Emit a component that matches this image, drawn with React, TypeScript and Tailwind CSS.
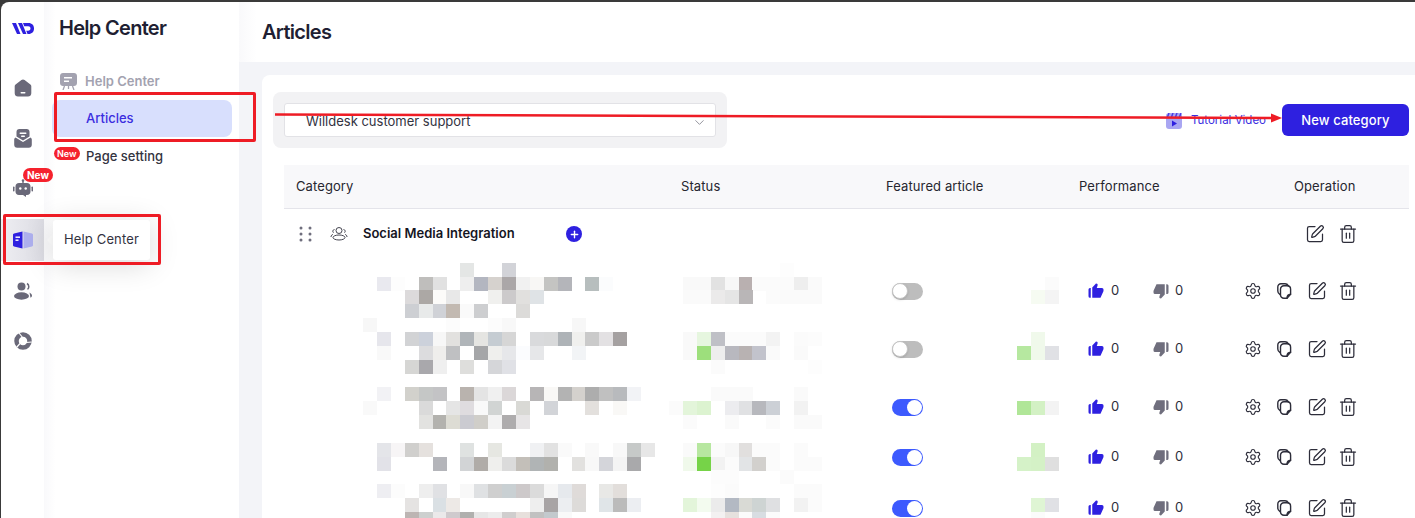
import React from 'react';
import { ChevronDown, Settings, SquarePen, Trash2, Plus } from 'lucide-react';
import { BiSolidLike, BiSolidDislike } from 'react-icons/bi';

// pixelated (redacted) parts of the table: row -> "column:colour" cells
type Cells = Record<number, string>;

const CELL_W = 13.9;
const CELL_H = 13.85;

const rows: { top: number; height: string; h: number; on: boolean; title: Cells; status: Cells; perf: Cells }[] = [
  {
    top: 262,
    height: 'h-[58px]',
    h: 58,
    on: false,
    title: {
      0: '7:e4e6e5 10:d2d3d8',
      1: '1:e9e9ef 2:fdfdfd 4:bfbebc 5:e1e1e1 7:eeeeee 8:b3b6c0 9:d6d2ce 10:aba7a8 11:f1f1f1 12:f8f7f5 13:c4c4c2 14:b4b5ba 16:b7bebe 17:fbfcfd',
      2: '3:dcdadb 4:aca8a5 5:fcfbf9 6:e8e8e8 9:f0f0ee 10:cccacb 11:e1e0de 12:dfe3e6',
      3: '3:cdcfd3 4:e8eaea 5:d0d2d7 6:c2b9b1 7:fafafa 8:cdced0 11:dcdbd9',
    },
    status: {
      0: '30:fdfdfd',
      1: '23:f9f9f9 24:f9f9f9 25:e2e2e2 26:f7f7f7 27:b9b0b0 28:fbfbfb 29:fbfbfb 30:fbfbfb 31:eeeeee 32:fafafa',
      2: '23:fafafa 24:fafafa 25:ebeaea 26:e5e5e5 27:b9b6b7 29:fbfbfb 30:fafafa 31:fafafa 32:fafafa',
    },
    perf: { 1: '49:fbfbfb', 2: '48:f6fbf2 49:f4f4f4' },
  },
  {
    top: 320,
    height: 'h-[58px]',
    h: 58,
    on: false,
    title: {
      4: '0:f7f7f7 6:fcfcfc 9:fcfcfc 10:f8f8f8 15:f7f7f7',
      5: '1:e6e6ec 3:d2d3d5 4:ccd1db 5:f7f7f7 6:e2e1df 7:b0b5b9 8:e5e5e2 9:c5ccd2 10:d6d6d6 12:d9dadc 13:d8d9da 14:aeb3b7 15:f0f0ee 16:cacaca 17:e3e1e3 18:a5a1a1',
      6: '1:f9f9f9 4:dcdcde 5:efeeec 6:bfc0c2 8:a5a6a8 9:efefed 10:e6e7ea 11:fbfcfe 12:e6e7e9 15:f2f4f6',
      7: '3:d6d6d4 4:a9a8ac 5:efefef 7:dededc 9:d5d6d9 10:e0e1e6',
    },
    status: {
      5: '23:f9f9f9 24:e6f6df 25:bfc0c6 26:fbfbfb 27:fbfbfb 28:fbfbfb 29:f3f3f3 31:fbfbfb 32:fcfcfc',
      6: '23:f9f9f9 24:9ddf7c 25:eeeeee 26:b8b8bf 27:b8b2b2 28:c2c3cc 29:fafafa 31:fafafa',
      7: '25:fbfbfb 32:fdfdfd',
    },
    perf: { 5: '48:f0f9eb', 6: '47:b6e8a0 48:f0f9eb 49:e0e1e5' },
  },
  {
    top: 378,
    height: 'h-[58px]',
    h: 58,
    on: true,
    title: {
      9: '1:f2f2f5 3:d2d1cc 4:c5c7c6 5:c3c3c5 7:b9b3ae 8:e4e4e4 9:f0f0f0 10:dbd7d8 12:b7b5b6 13:f9f8f6 14:b3b3b3 15:d4d1cd 16:adadad 17:c0c0c0 18:b8babd 19:f2f3f6',
      10: '0:f9f9f9 4:dadada 6:e5e5e5 7:dfdcdf 8:f9f9f9 9:d1d4d3 11:d9d9d5 13:d2d4d8 16:e3e0dd 18:f9f8f6 22:fafafa',
      11: '4:e2e2e0 5:b3b2ae 6:dddcd4 7:cbcbd1 8:d0cec9 9:f3f3f3 10:aeacad 11:e7e5e6',
    },
    status: {
      9: '25:fafafa 26:fafafa 27:fafafa 31:fafafa',
      10: '22:fbfbfb 23:e3f5da 24:dcf3d0 26:ececef 27:e0e1e3 28:b7b8bd 29:ccd0d6 31:f2f2f2',
      11: '23:fbfbfb 26:fafafa 29:fbfbfb 31:fafafa 32:fafafa',
    },
    perf: { 10: '47:b0e698 48:d3f1c4 49:f3f3f3' },
  },
  {
    top: 436,
    height: 'h-[42px]',
    h: 42,
    on: true,
    title: {
      13: '1:e4e5e9 2:f7f5f6 3:d0cfcd 4:e5e1de 7:dfe2e1 9:e6e7e2 12:f0f1f3 13:e2e2e2 14:fafafa 16:f9f9f9 18:f8f8f8 19:c6c9c8 20:e7e7e7',
      14: '1:e2e2e8 5:b4b5ba 7:d2d4d6 8:b0aca8 9:efefed 10:dbdbdb 11:c3bfb9 12:b0b4b5 13:b1b1ad 15:e2e1df 16:f8f8f8 17:d4d5da 18:f4f4f4 19:a9a9ab',
    },
    status: {
      13: '23:fafafa 24:b7e7a0 25:fbfbfb 26:f7f7f7 27:e1dfde 28:fbfbfb 29:fbfbfb 31:fbfbfb',
      14: '23:f0f9eb 24:76d348 25:f2f2f2 26:fbfbfb 27:e2e4e6 28:d2d0cd 29:fbfbfb 31:fbfbfb 32:fbfbfb',
      15: '25:fcfcfc 26:fcfcfc 30:fbfbfb',
    },
    perf: { 13: '48:d3f1c4', 14: '47:d5f2c8 48:d4f1c6 49:dfdfdf' },
  },
  {
    top: 478,
    height: 'h-[60px]',
    h: 60,
    on: true,
    title: {
      16: '1:eeeef2 2:fcfcfc 4:eeeeee 5:e0e1e4 7:f8f8f8 8:dfe1e3 9:cfcfcf 10:c9d0d3 11:cdc9ca 12:dbdbdb 13:f6f6f6 14:e6e9ed 15:dfdbd9 17:e8e8e6 18:e2dedb',
      17: '3:e5e3e2 5:dae0e4 6:ede9e6 12:eeeeee 13:a8a4a5 14:eceef1 15:dddbd9 17:e0e5e8 18:bbbbbb 19:eceef2',
      18: '3:bdb5b3 4:cdd0cf 5:ebe9ea 6:cfcacd 7:b0b0ae 8:e6e6e6 9:ececec 10:d0cece 11:e7e0dc 12:c1c1c1 13:c3c9cd 14:f9f9f9',
    },
    status: {
      16: '25:fdfdfd 26:fbfbfb 31:fbfbfb 32:fbfbfb',
      17: '23:e3f5da 24:f3fbef 25:ebebeb 26:b3b9c3 27:d9dad5 28:ced4d3 29:dfe0e2 31:f2f2f2 32:fbfbfb',
      18: '25:f3f1f1 26:e6e1de 27:fbfbfb 28:d8dde2 29:fbfbfb',
    },
    perf: { 17: '48:dff5d4 49:e0e1e5', 18: '48:fbfbfb' },
  },
];

function Mosaic({ cells, startCol, width, top, height }: { cells: Cells; startCol: number; width: number; top: number; height: number }) {
  const rects: React.ReactNode[] = [];
  Object.entries(cells).forEach(([r, line]) => {
    line.split(' ').forEach((item) => {
      const [c, hex] = item.split(':');
      const x = Math.round((Number(c) - startCol) * CELL_W);
      const y = Math.round(262.7 + Number(r) * CELL_H - top);
      rects.push(<rect key={r + c} x={x} y={y} width={14} height={14} fill={'#' + hex} />);
    });
  });
  return (
    <svg width={width} height={height} className="shrink-0 overflow-visible" shapeRendering="crispEdges">
      {rects}
    </svg>
  );
}

function Toggle({ on }: { on: boolean }) {
  return (
    <div className={on ? 'flex h-[17px] w-[31px] shrink-0 items-center justify-end rounded-full bg-[#3d5afe] px-[1px]' : 'flex h-[17px] w-[31px] shrink-0 items-center rounded-full bg-[#bdbdbd]'}>
      <div className={on ? 'h-[15px] w-[15px] rounded-full bg-white' : 'h-[16px] w-[16px] rounded-full border border-[#c4c4c4] bg-white shadow-sm'} />
    </div>
  );
}

function CopyIcon() {
  return (
    <svg width="18" height="18" viewBox="0 0 18 18" fill="none" stroke="#2d2d3a" strokeWidth="1.4" strokeLinecap="round" strokeLinejoin="round">
      <path d="M4 12.500C2.600 11.800 1.800 10.600 1.800 9V5C1.800 3 3 1.800 5 1.800h4c1.500 0 2.700.8 3.400 2" />
      <path d="M11 16.200H8C5.900 16.200 4.500 14.800 4.500 12.700V7.300C4.500 5.200 5.900 3.800 8 3.800h3c2.200 0 3.600 1.400 3.600 3.500v5L11 16.200Z" />
      <path d="M11 16.200c0-2.400 1.200-3.700 3.600-3.900" fill="#2d2d3a" />
    </svg>
  );
}

function ArticleRow({ row }: { row: (typeof rows)[number] }) {
  return (
    <div className={`flex items-center ${row.height}`}>
      <div className="w-[79px] shrink-0" />
      <div className="w-[306px] shrink-0">
        <Mosaic cells={row.title} startCol={0} width={306} top={row.top} height={row.h} />
      </div>
      <div className="w-[223px] shrink-0">
        <Mosaic cells={row.status} startCol={22} width={160} top={row.top} height={row.h} />
      </div>
      <Toggle on={row.on} />
      <div className="w-[94px] shrink-0" />
      <div className="w-[71px] shrink-0">
        <Mosaic cells={row.perf} startCol={47} width={42} top={row.top} height={row.h} />
      </div>
      <div className="flex w-[65px] shrink-0 items-center gap-[6px]">
        <BiSolidLike size={18} className="-ml-[1px] text-[#2e20e0]" />
        <span className="text-[13px] text-[#2d2d3a]">0</span>
      </div>
      <div className="flex w-[91px] shrink-0 items-center gap-[5px]">
        <BiSolidDislike size={18} className="-ml-[1px] text-[#6f6e7d]" />
        <span className="text-[13px] text-[#2d2d3a]">0</span>
      </div>
      <div className="flex items-center">
        <Settings size={18} strokeWidth={1.5} className="mr-[14px] shrink-0 text-[#2d2d3a]" />
        <div className="mr-[13px] shrink-0">
          <CopyIcon />
        </div>
        <SquarePen size={20} strokeWidth={1.5} className="mr-[11px] shrink-0 text-[#2d2d3a]" />
        <Trash2 size={20} strokeWidth={1.5} className="shrink-0 text-[#2d2d3a]" />
      </div>
    </div>
  );
}

function RailIcon({ children, active }: { children: React.ReactNode; active?: boolean }) {
  return (
    <div className={active ? 'flex h-[42px] w-full items-center justify-center bg-gradient-to-r from-[#eeeef2] to-[#dcdce3]' : 'flex h-[42px] w-full items-center justify-center'}>
      {children}
    </div>
  );
}

const GREY = '#6a6979';

function Rail() {
  return (
    <aside className="relative flex w-[43px] shrink-0 flex-col items-center">
      <svg width="22" height="11" viewBox="0 0 22 11" className="mt-[21px]" fill="#2e20e0">
        <path d="M0 0h4l4.500 11H5L0 0Z" />
        <path d="M6 0h4l4.500 11H11L6 0Z" />
        <path d="M11 0h5.500C20 0 22 2.300 22 5.500S20 11 16.500 11h-1l-1.300-3.300h2c1.300 0 2.300-.8 2.300-2.200s-1-2.200-2.300-2.200h-4L11 0Z" />
      </svg>
      <div className="mt-[33px] flex w-full flex-col">
        <RailIcon>
          <svg width="18" height="18" viewBox="0 0 18 18">
            <path d="M9 .5c.6 0 1.100.2 1.600.6l5.800 4.400c.6.5.9 1 .9 1.800v6.900c0 2-1.400 3.300-3.300 3.300H4c-1.900 0-3.300-1.300-3.300-3.300V7.300c0-.8.300-1.300.9-1.800l5.800-4.400C7.900.7 8.400.5 9 .5Z" fill={GREY} />
            <rect x="6.500" y="13" width="5" height="1.500" rx=".7" fill="#fff" />
          </svg>
        </RailIcon>
        <div className="h-[8px]" />
        <RailIcon>
          <svg width="18" height="19" viewBox="0 0 18 19">
            <path d="M5.500 0h7C14.500 0 15.500 1.200 15.500 3v4.500L9 11.500 2.500 7.500V3C2.500 1.200 3.500 0 5.500 0Z" fill={GREY} />
            <rect x="5.500" y="3.500" width="7" height="1.500" rx=".7" fill="#fff" />
            <rect x="7" y="6.500" width="4" height="1.500" rx=".7" fill="#fff" />
            <path d="M1.500 8.500 9 13l7.500-4.500c.9.600 1.300 1.200 1.300 2.200v5c0 1.800-1.200 3-3 3H3.200c-1.800 0-3-1.200-3-3v-5c0-1 .4-1.600 1.300-2.200Z" fill={GREY} />
          </svg>
        </RailIcon>
        <div className="h-[8px]" />
        <RailIcon>
          <svg width="20" height="18" viewBox="0 0 20 18">
            <circle cx="10" cy="1.500" r="1.300" fill={GREY} />
            <rect x="9.300" y="2" width="1.400" height="3" fill={GREY} />
            <path d="M6 4h8c2.200 0 3.500 1.300 3.500 3.500v5c0 2.200-1.300 3.500-3.500 3.500h-1v2l-3-2H6c-2.200 0-3.500-1.300-3.500-3.500v-5C2.500 5.300 3.800 4 6 4Z" fill={GREY} />
            <circle cx="7.300" cy="9.500" r="1.200" fill="#fff" />
            <circle cx="12.700" cy="9.500" r="1.200" fill="#fff" />
            <rect x="0" y="7.500" width="1.500" height="5" rx=".7" fill={GREY} />
            <rect x="18.500" y="7.500" width="1.500" height="5" rx=".7" fill={GREY} />
          </svg>
        </RailIcon>
        <div className="h-[10px]" />
        <RailIcon active>
          <svg width="20" height="18" viewBox="0 0 20 18">
            <path d="M1 2.500 9.500 .5v17L1 15.500c-.5-.1-1-.6-1-1.200V3.700c0-.6.500-1.100 1-1.200Z" fill="#2e20e0" />
            <path d="M19 2.500 10.500 .5v17l8.500-2c.5-.1 1-.6 1-1.200V3.700c0-.6-.5-1.100-1-1.200Z" fill="#aeb0ee" />
            <rect x="2.500" y="5.500" width="4.500" height="1.400" fill="#fff" />
            <rect x="2.500" y="8.500" width="3" height="1.400" fill="#fff" />
          </svg>
        </RailIcon>
        <div className="h-[9px]" />
        <RailIcon>
          <svg width="18" height="18" viewBox="0 0 18 18">
            <circle cx="7.500" cy="4.500" r="4" fill={GREY} />
            <ellipse cx="7.500" cy="14" rx="7.500" ry="3.700" fill={GREY} />
            <path d="M13 1.500c1.300.8 1.800 2 1.800 3.200 0 1-.5 2-1.300 2.600" fill="none" stroke={GREY} strokeWidth="1.500" />
            <path d="M15.500 10.500c1.500.8 2.500 2 2.500 3.300 0 .8-.5 1.500-1.500 2" fill={GREY} />
          </svg>
        </RailIcon>
        <div className="h-[8px]" />
        <RailIcon>
          <svg width="18" height="18" viewBox="0 0 18 18" fill="none">
            <circle cx="9" cy="9" r="6.500" stroke={GREY} strokeWidth="4.500" />
            <path d="M9 6 5 1M12.200 10.500l5.500-.5M6 11.500l-3.500 4" stroke="#fff" strokeWidth="1.200" />
          </svg>
        </RailIcon>
      </div>
      <span className="absolute left-[22px] top-[166px] rounded-full bg-[#f5222d] px-[4px] text-[10px] font-bold leading-[14px] text-white">New</span>
    </aside>
  );
}

function SidePanel() {
  return (
    <aside className="flex w-[195px] shrink-0 flex-col bg-gradient-to-r from-[#f9f9fb] from-0% to-white to-[6%]">
      <h1 className="ml-[15px] mt-[13px] text-[20px] font-semibold leading-[26px] tracking-[-0.7px] text-[#1f1f33]">Help Center</h1>
      <div className="ml-[16px] mt-[31px] flex items-center gap-[8px]">
        <svg width="17" height="17" viewBox="0 0 17 17">
          <path d="M3 0h11c1.700 0 3 1.200 3 3v7c0 1.800-1.300 3-3 3H3c-1.700 0-3-1.200-3-3V3c0-1.800 1.300-3 3-3Z" fill="#a3a2b0" />
          <rect x="4" y="4" width="8" height="1.500" fill="#fff" />
          <rect x="4" y="7.500" width="5" height="1.500" fill="#fff" />
          <path d="M4.500 13 3 17M12.500 13l1.500 4M8.500 13v3" stroke="#a3a2b0" strokeWidth="1.300" />
        </svg>
        <span className="text-[13px] font-semibold leading-[18px] text-[#a3a2b0]">Help Center</span>
      </div>
      <div className="ml-[8px] mt-[10px] flex h-[37px] w-[180px] items-center rounded-lg bg-[#d8dffd] pl-[34px] text-[13px] font-medium text-[#3b2de0]">Articles</div>
      <div className="relative ml-[42px] mt-[10px] text-[13px] font-medium leading-[18px] text-[#33333f]">
        Page setting
        <span className="absolute left-[-32px] top-0 rounded-full bg-[#f5222d] px-[3px] text-[9px] font-semibold leading-[13px] text-white">New</span>
      </div>
    </aside>
  );
}

function TableHead() {
  return (
    <div className="flex h-[44px] items-center border-b border-[#e4e4ea] bg-[#f8f8fa] pl-[12px] text-[13px] tracking-[0.1px] text-[#26262f]">
      <span className="w-[385px] shrink-0">Category</span>
      <span className="w-[205px] shrink-0">Status</span>
      <span className="w-[193px] shrink-0">Featured article</span>
      <span className="w-[215px] shrink-0">Performance</span>
      <span>Operation</span>
    </div>
  );
}

function CategoryRow() {
  return (
    <div className="flex h-[53px] items-center pb-[3px] pl-[15px] pr-[51px]">
      <svg width="14" height="16" viewBox="0 0 14 16" className="shrink-0" fill="#6f6e7d">
        <circle cx="2" cy="2" r="1.500" /><circle cx="11" cy="2" r="1.500" />
        <circle cx="2" cy="8" r="1.500" /><circle cx="11" cy="8" r="1.500" />
        <circle cx="2" cy="14" r="1.500" /><circle cx="11" cy="14" r="1.500" />
      </svg>
      <svg width="18" height="16" viewBox="0 0 18 16" fill="none" stroke="#44444f" strokeWidth="1" className="ml-[17px] shrink-0">
        <circle cx="9" cy="4.500" r="3" />
        <path d="M4.500 3.500a1.800 1.800 0 0 0-1 3.200M13.500 3.500a1.800 1.800 0 0 1 1 3.200" />
        <path d="M1 11c0-1.500 1-2.500 2-2.500M17 11c0-1.500-1-2.500-2-2.500" />
        <ellipse cx="9" cy="11.500" rx="6" ry="2.500" />
      </svg>
      <span className="ml-[15px] w-[203px] shrink-0 text-[13px] font-semibold text-[#15151f]">Social Media Integration</span>
      <span className="flex h-[16px] w-[16px] shrink-0 items-center justify-center rounded-full bg-[#2e20e0] text-white">
        <Plus size={11} strokeWidth={3} />
      </span>
      <div className="ml-auto flex items-center gap-[13px]">
        <SquarePen size={20} strokeWidth={1.5} className="shrink-0 text-[#2d2d3a]" />
        <Trash2 size={20} strokeWidth={1.5} className="shrink-0 text-[#2d2d3a]" />
      </div>
    </div>
  );
}

function Annotations() {
  return (
    <>
      <div className="absolute left-[54px] top-[92px] h-[50px] w-[202px] rounded-[2px] border-[3px] border-[#ee1c25]" />
      <div className="absolute left-[3px] top-[214px] h-[51px] w-[158px] rounded-[2px] border-[3px] border-[#ee1c25]" />
      <svg className="absolute left-0 top-0" width="1415" height="518">
        <path d="M275 114.500 1272 118" stroke="#ee1c25" strokeWidth="2.500" />
        <path d="M1282 118 1271 113.500v9Z" fill="#ee1c25" />
      </svg>
    </>
  );
}

function App() {
  return (
    <div className="relative h-screen w-full overflow-hidden bg-[#3a3a3a] pl-[1px] pt-[2px] font-[Inter,sans-serif]">
      <div className="flex h-full overflow-hidden rounded-tl-[8px] bg-white">
        <Rail />
        <SidePanel />
        <main className="flex min-w-0 flex-1 flex-col bg-[#f3f4f8]">
          <header className="flex h-[60px] shrink-0 items-center bg-gradient-to-r from-[#f9f9fb] to-white to-[1.5%] pl-[23px]">
            <h2 className="text-[20px] font-semibold tracking-[-0.7px] text-[#1f1f33]">Articles</h2>
          </header>
          <section className="ml-[23px] mt-[13px] flex-1 rounded-tl-lg bg-white pl-[11px] pr-[6px] pt-[17px]">
            <div className="flex items-center justify-between">
              <div className="flex h-[56px] w-[454px] items-center rounded-lg bg-[#f2f2f4] px-[11px]">
                <div className="flex h-[34px] w-full items-center justify-between rounded-[3px] border border-[#e2e2e6] bg-white pl-[21px] pr-[8px] pt-[4px] text-[13px] text-[#33333f]">
                  <span>Willdesk customer support</span>
                  <ChevronDown size={15} strokeWidth={1.4} className="text-[#85858f]" />
                </div>
              </div>
              <div className="flex items-center pt-[1px]">
                <svg width="16" height="16" viewBox="0 0 16 16" className="mr-[9px]">
                  <rect width="16" height="16" rx="3" fill="#a9a6f2" />
                  <path d="M3 0 1.500 4M7 0 5.500 4M11 0 9.500 4M15 0l-1.500 4" stroke="#4a3de6" strokeWidth="1.500" />
                  <path d="M6 7.500 11 10.500 6 13.500Z" fill="#2e20e0" />
                </svg>
                <span className="mr-[16px] text-[11.5px] text-[#3b2de0]">Tutorial Video</span>
                <button className="-mt-[1px] h-[32px] w-[127px] rounded-md bg-[#2e20e0] pt-[1px] text-[13px] font-medium tracking-[0.1px] text-white">New category</button>
              </div>
            </div>
            <div className="ml-[11px] mt-[17px]">
              <TableHead />
              <CategoryRow />
              {rows.map((row) => (
                <ArticleRow key={row.top} row={row} />
              ))}
            </div>
          </section>
        </main>
      </div>
      <div className="absolute left-[47px] top-[220px] flex h-[40px] items-center">
        <div className="h-0 w-0 border-y-[6px] border-r-[6px] border-y-transparent border-r-white" />
        <div className="flex h-[40px] w-[97px] items-center justify-center rounded-[3px] bg-white text-[13px] tracking-[0.15px] text-[#33333f] shadow-[0_4px_30px_rgba(0,0,0,0.16)]">Help Center</div>
      </div>
      <Annotations />
    </div>
  );
}

export default App;
